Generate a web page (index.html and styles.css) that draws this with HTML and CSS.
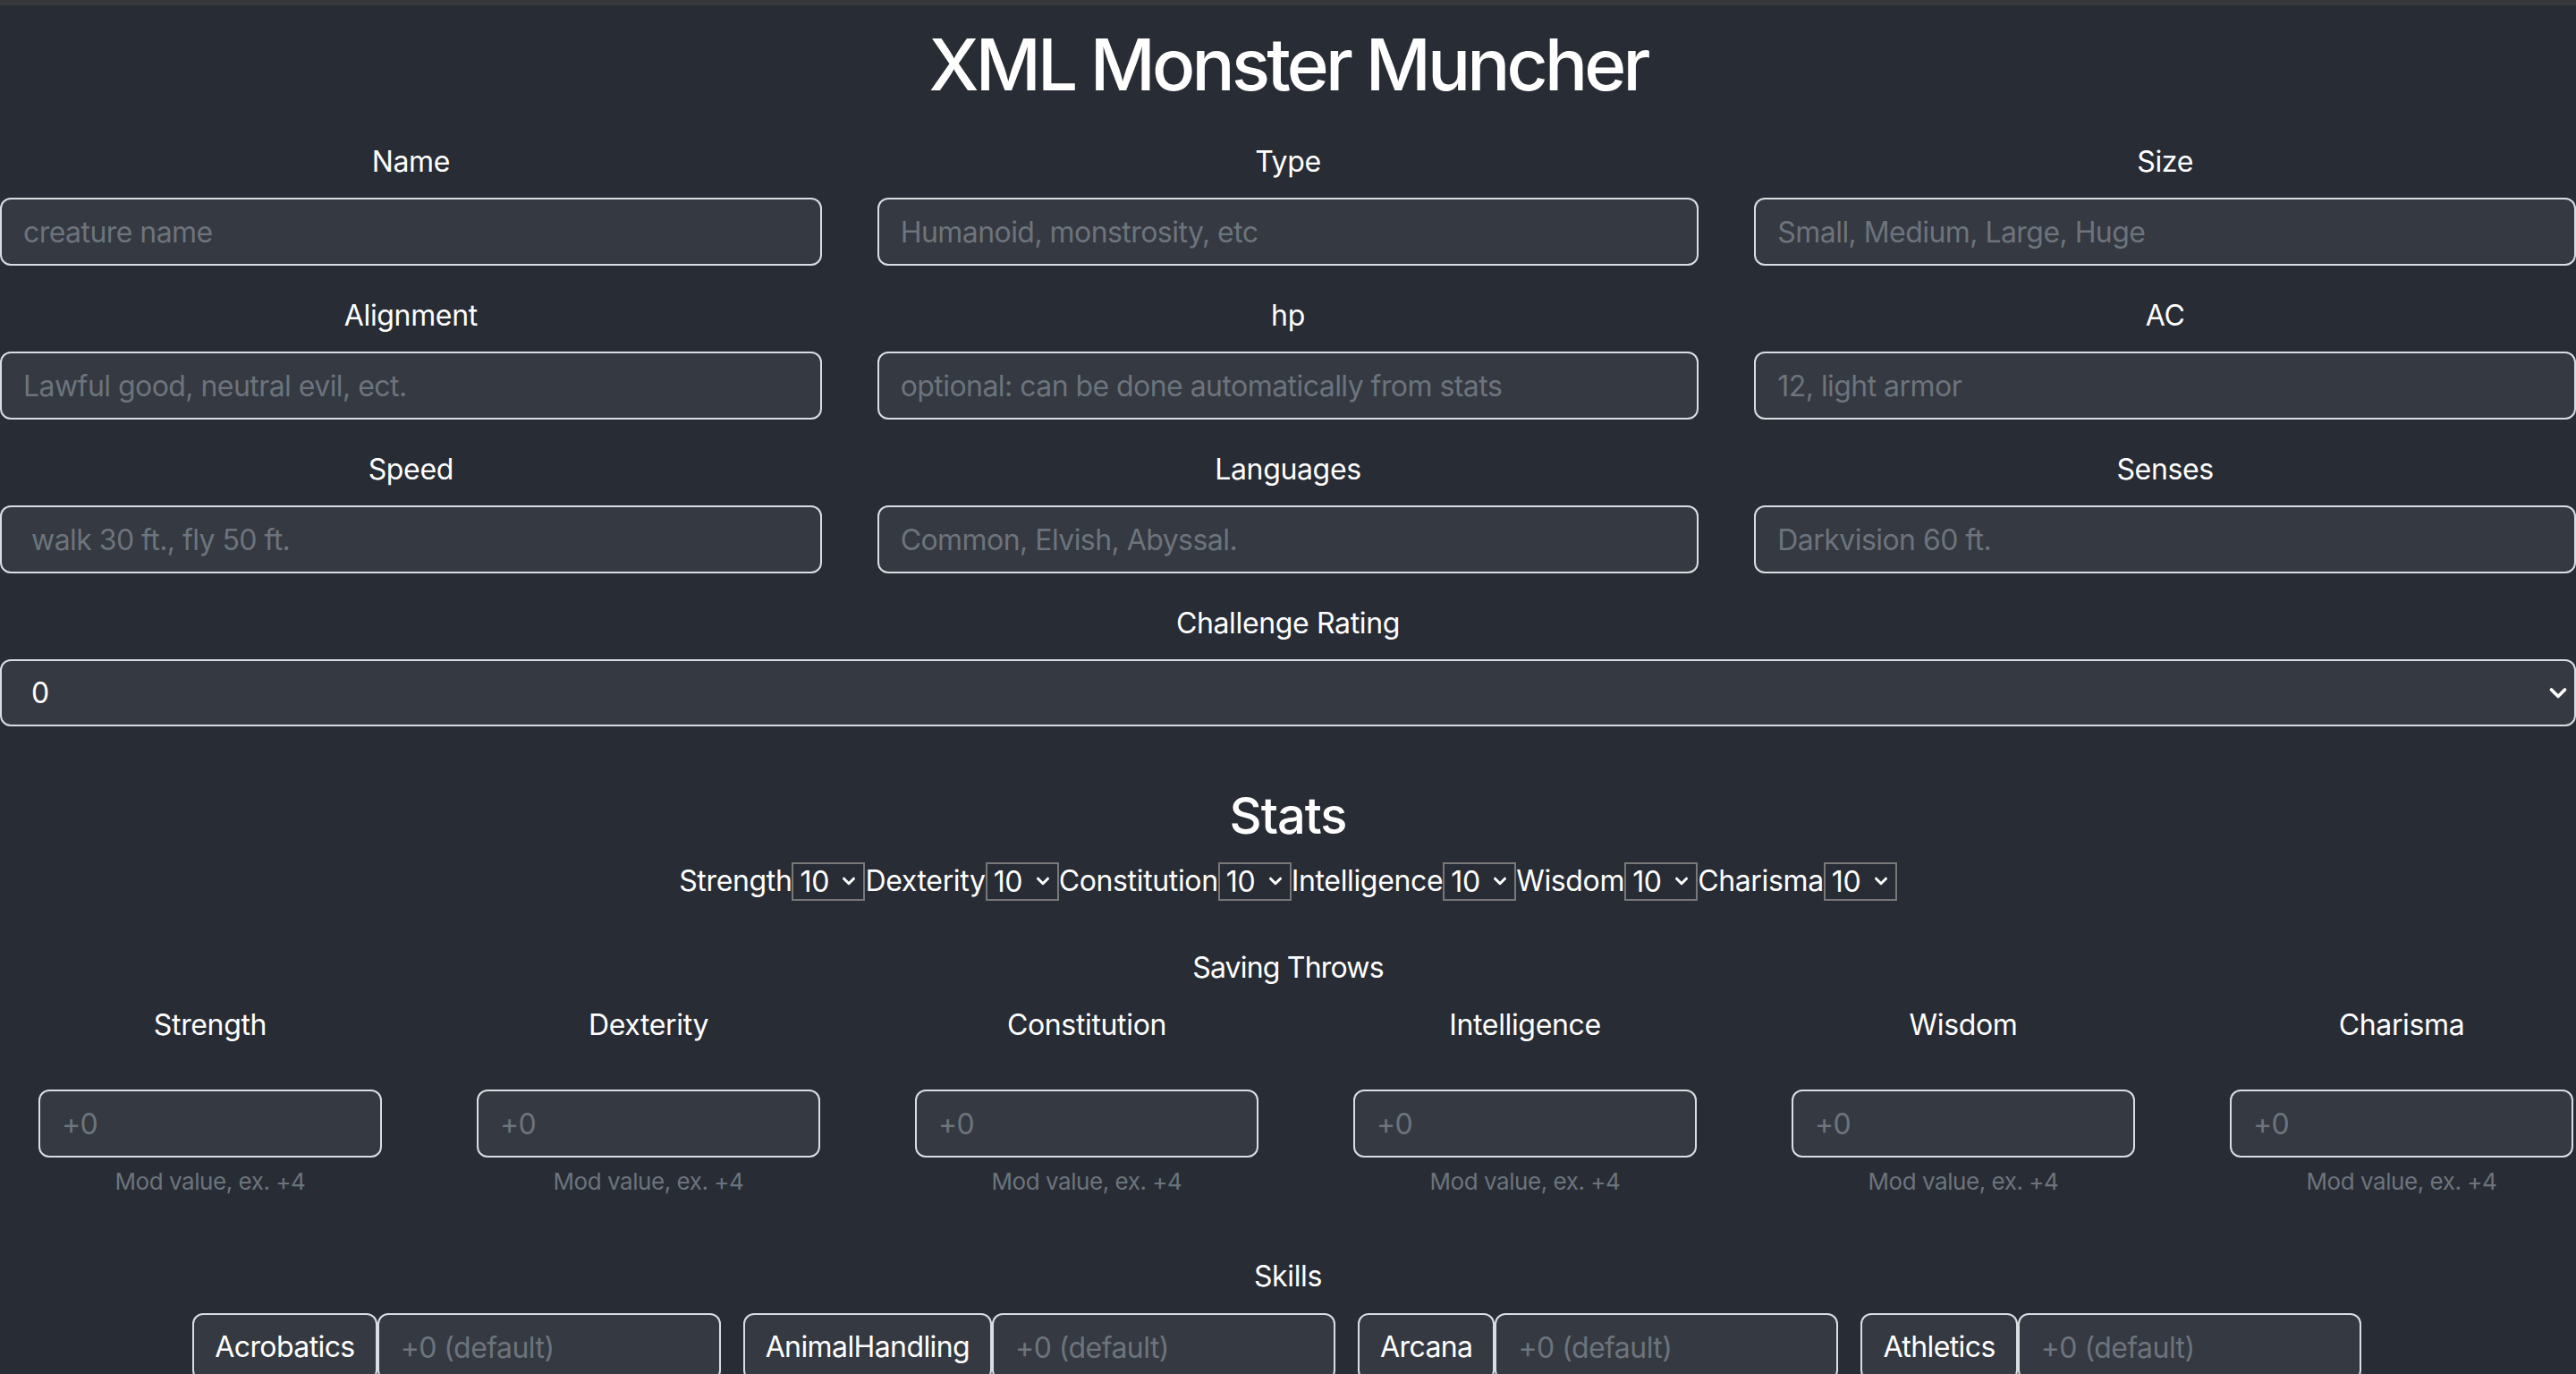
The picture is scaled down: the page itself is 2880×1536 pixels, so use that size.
FILE: index.html
```html
<!DOCTYPE html>
<html lang="en">
<head>
<meta charset="utf-8">
<title>XML Monster Muncher</title>
<link rel="stylesheet" href="styles.css">
</head>
<body>
<div class="frame-top"></div>
<main class="page">
  <h1 class="title">XML Monster Muncher</h1>

  <div class="fields">
    <div class="field"><label class="field-label">Name</label><input class="control" placeholder="creature name"></div>
    <div class="field"><label class="field-label">Type</label><input class="control" placeholder="Humanoid, monstrosity, etc"></div>
    <div class="field"><label class="field-label">Size</label><input class="control" placeholder="Small, Medium, Large, Huge"></div>
    <div class="field"><label class="field-label">Alignment</label><input class="control" placeholder="Lawful good, neutral evil, ect."></div>
    <div class="field"><label class="field-label">hp</label><input class="control" placeholder="optional: can be done automatically from stats"></div>
    <div class="field"><label class="field-label">AC</label><input class="control" placeholder="12, light armor"></div>
    <div class="field"><label class="field-label">Speed</label><input class="control control-indent" placeholder="walk 30 ft., fly 50 ft."></div>
    <div class="field"><label class="field-label">Languages</label><input class="control" placeholder="Common, Elvish, Abyssal."></div>
    <div class="field"><label class="field-label">Senses</label><input class="control" placeholder="Darkvision 60 ft."></div>
  </div>

  <div class="field field-wide">
    <label class="field-label">Challenge Rating</label>
    <select class="control select-big">
      <option>0</option><option>1/8</option><option>1/4</option><option>1/2</option><option>1</option>
    </select>
  </div>

  <h3 class="section-title">Stats</h3>
  <div class="stats">
    <span class="stat-name">Strength</span><select class="mini"><option>10</option></select>
    <span class="stat-name">Dexterity</span><select class="mini"><option>10</option></select>
    <span class="stat-name">Constitution</span><select class="mini"><option>10</option></select>
    <span class="stat-name">Intelligence</span><select class="mini"><option>10</option></select>
    <span class="stat-name">Wisdom</span><select class="mini"><option>10</option></select>
    <span class="stat-name">Charisma</span><select class="mini"><option>10</option></select>
  </div>

  <div class="sub-title sub-saves">Saving Throws</div>
  <div class="saves">
    <div class="save"><label class="save-label">Strength</label><input class="control" placeholder="+0"><div class="help">Mod value, ex. +4</div></div>
    <div class="save"><label class="save-label">Dexterity</label><input class="control" placeholder="+0"><div class="help">Mod value, ex. +4</div></div>
    <div class="save"><label class="save-label">Constitution</label><input class="control" placeholder="+0"><div class="help">Mod value, ex. +4</div></div>
    <div class="save"><label class="save-label">Intelligence</label><input class="control" placeholder="+0"><div class="help">Mod value, ex. +4</div></div>
    <div class="save"><label class="save-label">Wisdom</label><input class="control" placeholder="+0"><div class="help">Mod value, ex. +4</div></div>
    <div class="save"><label class="save-label">Charisma</label><input class="control" placeholder="+0"><div class="help">Mod value, ex. +4</div></div>
  </div>

  <div class="sub-title sub-skills">Skills</div>
  <div class="skills">
    <div class="skill"><span class="skill-name">Acrobatics</span><input class="control skill-input" placeholder="+0 (default)"></div>
    <div class="skill"><span class="skill-name">AnimalHandling</span><input class="control skill-input" placeholder="+0 (default)"></div>
    <div class="skill"><span class="skill-name">Arcana</span><input class="control skill-input" placeholder="+0 (default)"></div>
    <div class="skill"><span class="skill-name">Athletics</span><input class="control skill-input" placeholder="+0 (default)"></div>
    <div class="skill"><span class="skill-name">Deception</span><input class="control skill-input" placeholder="+0 (default)"></div>
    <div class="skill"><span class="skill-name">History</span><input class="control skill-input" placeholder="+0 (default)"></div>
    <div class="skill"><span class="skill-name">Insight</span><input class="control skill-input" placeholder="+0 (default)"></div>
    <div class="skill"><span class="skill-name">Intimidation</span><input class="control skill-input" placeholder="+0 (default)"></div>
    <div class="skill"><span class="skill-name">Investigation</span><input class="control skill-input" placeholder="+0 (default)"></div>
    <div class="skill"><span class="skill-name">Medicine</span><input class="control skill-input" placeholder="+0 (default)"></div>
    <div class="skill"><span class="skill-name">Nature</span><input class="control skill-input" placeholder="+0 (default)"></div>
    <div class="skill"><span class="skill-name">Perception</span><input class="control skill-input" placeholder="+0 (default)"></div>
  </div>
</main>
</body>
</html>
```

FILE: styles.css
```css
html {
  scrollbar-width: none;
  background: #282c34;
}

body {
  margin: 0;
  background: #282c34;
  color: #ffffff;
  font-family: Inter, "Noto Sans", "Liberation Sans", sans-serif;
  font-size: 32px;
  line-height: 48px;
  letter-spacing: -0.35px;
}

.frame-top {
  height: 6px;
  background: #37383b;
}

.page {
  text-align: center;
}

.title {
  margin: 18px 0 37px;
  font-size: 80px;
  line-height: 96px;
  font-weight: 500;
  letter-spacing: -3.8px;
}

.fields {
  display: grid;
  grid-template-columns: repeat(3, 1fr);
  column-gap: 62px;
  row-gap: 32px;
}

.field {
  display: flex;
  flex-direction: column;
}

.field-label {
  display: block;
  margin-bottom: 16px;
}

.field-wide {
  margin-top: 32px;
}

.control {
  box-sizing: border-box;
  width: 100%;
  height: 76px;
  margin: 0;
  padding: 0 24px;
  border: 2px solid #dadee3;
  border-radius: 12px;
  background: #353941;
  color: #ffffff;
  font-family: inherit;
  font-size: 32px;
  letter-spacing: -0.55px;
  text-align: left;
  outline: none;
}

.control::placeholder {
  color: #6c747c;
  opacity: 1;
}

.control-indent {
  padding-left: 33px;
}

.select-big {
  height: 75px;
  padding-left: 33px;
  appearance: none;
  -webkit-appearance: none;
  background-image: url("data:image/svg+xml,%3csvg xmlns='http://www.w3.org/2000/svg' viewBox='0 0 20 14'%3e%3cpath d='M2.5 3l7.5 7.5L17.5 3' fill='none' stroke='%23ffffff' stroke-width='3.6' stroke-linecap='round' stroke-linejoin='round'/%3e%3c/svg%3e");
  background-repeat: no-repeat;
  background-position: right 8px center;
  background-size: 20px 14px;
}

.section-title {
  margin: 67px 0 15px;
  font-size: 56px;
  line-height: 67px;
  font-weight: 500;
  letter-spacing: -1px;
}

.stats {
  display: flex;
  justify-content: center;
  align-items: center;
  height: 48px;
}

.mini {
  box-sizing: border-box;
  width: 82px;
  height: 43px;
  margin: 0;
  padding: 0 0 0 7px;
  border: 2px solid #787878;
  border-radius: 0;
  background-color: transparent;
  color: #ffffff;
  font-family: inherit;
  font-size: 32px;
  letter-spacing: -0.35px;
  appearance: none;
  -webkit-appearance: none;
  background-image: url("data:image/svg+xml,%3csvg xmlns='http://www.w3.org/2000/svg' viewBox='0 0 16 12'%3e%3cpath d='M2.5 3.2l5.5 5.5 5.5-5.5' fill='none' stroke='%23ffffff' stroke-width='3' stroke-linecap='round' stroke-linejoin='round'/%3e%3c/svg%3e");
  background-repeat: no-repeat;
  background-position: right 8px center;
  background-size: 16px 12px;
}

.sub-title {
  line-height: 48px;
}

.sub-saves {
  margin-top: 49px;
  letter-spacing: -0.8px;
}

.saves {
  display: grid;
  grid-template-columns: repeat(6, 384px);
  column-gap: 106px;
  margin: 16px 0 0 43px;
}

.save {
  display: flex;
  flex-direction: column;
}

.save-label {
  display: block;
  margin-bottom: 48px;
}

.help {
  margin-top: 6px;
  font-size: 26px;
  line-height: 42px;
  color: #6c747c;
  letter-spacing: -0.45px;
}

.sub-skills {
  margin-top: 61px;
}

.skills {
  display: flex;
  flex-wrap: wrap;
  justify-content: center;
  row-gap: 24px;
  margin-top: 17px;
}

.skill {
  display: flex;
  margin-right: 25px;
}

.skill-name {
  box-sizing: border-box;
  height: 76px;
  padding: 0 23px;
  display: flex;
  align-items: center;
  border: 2px solid #dadee3;
  border-radius: 12px;
  background: #353941;
  white-space: nowrap;
  letter-spacing: -0.6px;
}

.skill-input {
  width: 384px;
}
```
